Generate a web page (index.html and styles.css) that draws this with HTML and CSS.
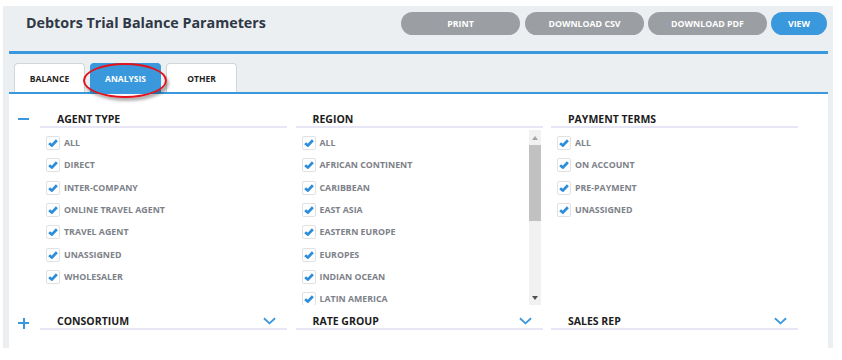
FILE: index.html
```html
<!doctype html>
<html>
<head>
	<title>Debtors Trial Balance Parameters</title>
	<link rel="stylesheet" href="styles.css">
</head>
<body>
	<div id="panel">
		<div class="header">
			<h1>Debtors Trial Balance Parameters</h1>
			<div class="actions">
				<button class="btn">PRINT</button>
				<button class="btn">DOWNLOAD CSV</button>
				<button class="btn">DOWNLOAD PDF</button>
				<button class="btn btn-primary">VIEW</button>
			</div>
		</div>

		<div class="tabs">
			<div class="tab">BALANCE</div>
			<div class="tab tab-active">ANALYSIS</div>
			<div class="tab">OTHER</div>
			<div class="marker"></div>
		</div>

		<div class="content">
			<!-- open group -->
			<div class="group">
				<div class="toggle"><span class="minus"></span></div>
				<div class="section">
					<div class="section-head">AGENT TYPE</div>
					<div class="list">
						<div class="item"><span class="box"><svg viewBox="0 0 14 14"><path d="M2.5 7.2 L5.6 10 L11.5 3.8"/></svg></span>ALL</div>
						<div class="item"><span class="box"><svg viewBox="0 0 14 14"><path d="M2.5 7.2 L5.6 10 L11.5 3.8"/></svg></span>DIRECT</div>
						<div class="item"><span class="box"><svg viewBox="0 0 14 14"><path d="M2.5 7.2 L5.6 10 L11.5 3.8"/></svg></span>INTER-COMPANY</div>
						<div class="item"><span class="box"><svg viewBox="0 0 14 14"><path d="M2.5 7.2 L5.6 10 L11.5 3.8"/></svg></span>ONLINE TRAVEL AGENT</div>
						<div class="item"><span class="box"><svg viewBox="0 0 14 14"><path d="M2.5 7.2 L5.6 10 L11.5 3.8"/></svg></span>TRAVEL AGENT</div>
						<div class="item"><span class="box"><svg viewBox="0 0 14 14"><path d="M2.5 7.2 L5.6 10 L11.5 3.8"/></svg></span>UNASSIGNED</div>
						<div class="item"><span class="box"><svg viewBox="0 0 14 14"><path d="M2.5 7.2 L5.6 10 L11.5 3.8"/></svg></span>WHOLESALER</div>
					</div>
				</div>
				<div class="section">
					<div class="section-head">REGION</div>
					<div class="list list-scroll">
						<div class="items">
							<div class="item"><span class="box"><svg viewBox="0 0 14 14"><path d="M2.5 7.2 L5.6 10 L11.5 3.8"/></svg></span>ALL</div>
							<div class="item"><span class="box"><svg viewBox="0 0 14 14"><path d="M2.5 7.2 L5.6 10 L11.5 3.8"/></svg></span>AFRICAN CONTINENT</div>
							<div class="item"><span class="box"><svg viewBox="0 0 14 14"><path d="M2.5 7.2 L5.6 10 L11.5 3.8"/></svg></span>CARIBBEAN</div>
							<div class="item"><span class="box"><svg viewBox="0 0 14 14"><path d="M2.5 7.2 L5.6 10 L11.5 3.8"/></svg></span>EAST ASIA</div>
							<div class="item"><span class="box"><svg viewBox="0 0 14 14"><path d="M2.5 7.2 L5.6 10 L11.5 3.8"/></svg></span>EASTERN EUROPE</div>
							<div class="item"><span class="box"><svg viewBox="0 0 14 14"><path d="M2.5 7.2 L5.6 10 L11.5 3.8"/></svg></span>EUROPES</div>
							<div class="item"><span class="box"><svg viewBox="0 0 14 14"><path d="M2.5 7.2 L5.6 10 L11.5 3.8"/></svg></span>INDIAN OCEAN</div>
							<div class="item"><span class="box"><svg viewBox="0 0 14 14"><path d="M2.5 7.2 L5.6 10 L11.5 3.8"/></svg></span>LATIN AMERICA</div>
						</div>
						<div class="scrollbar">
							<span class="arrow-up"></span>
							<span class="thumb"></span>
							<span class="arrow-down"></span>
						</div>
					</div>
				</div>
				<div class="section">
					<div class="section-head">PAYMENT TERMS</div>
					<div class="list">
						<div class="item"><span class="box"><svg viewBox="0 0 14 14"><path d="M2.5 7.2 L5.6 10 L11.5 3.8"/></svg></span>ALL</div>
						<div class="item"><span class="box"><svg viewBox="0 0 14 14"><path d="M2.5 7.2 L5.6 10 L11.5 3.8"/></svg></span>ON ACCOUNT</div>
						<div class="item"><span class="box"><svg viewBox="0 0 14 14"><path d="M2.5 7.2 L5.6 10 L11.5 3.8"/></svg></span>PRE-PAYMENT</div>
						<div class="item"><span class="box"><svg viewBox="0 0 14 14"><path d="M2.5 7.2 L5.6 10 L11.5 3.8"/></svg></span>UNASSIGNED</div>
					</div>
				</div>
			</div>

			<!-- closed group -->
			<div class="group group-closed">
				<div class="toggle"><span class="plus"></span></div>
				<div class="section">
					<div class="section-head">CONSORTIUM<svg class="chevron" viewBox="0 0 14 8"><path d="M1 1 L7 6.5 L13 1"/></svg></div>
				</div>
				<div class="section">
					<div class="section-head">RATE GROUP<svg class="chevron" viewBox="0 0 14 8"><path d="M1 1 L7 6.5 L13 1"/></svg></div>
				</div>
				<div class="section">
					<div class="section-head">SALES REP<svg class="chevron" viewBox="0 0 14 8"><path d="M1 1 L7 6.5 L13 1"/></svg></div>
				</div>
			</div>
		</div>
	</div>
</body>
</html>
```

FILE: styles.css
```css
body {
	margin: 0;
	font-family: "Open Sans", "DejaVu Sans", sans-serif;
	background-color: #fff;
}

#panel {
	margin: 6px 0 0 3px;
	width: 830px;
	height: 342px;
	padding: 0 5px 0 6px;
	box-sizing: border-box;
	background-color: #eceff1;
	display: flex;
	flex-direction: column;
}

.header {
	display: flex;
	justify-content: space-between;
	align-items: flex-start;
	height: 45px;
	border-bottom: 3px solid #3a98dc;
}

h1 {
	margin: 7px 0 0 17px;
	font-size: 14.3px;
	font-weight: 700;
	color: #2f3846;
}

.actions {
	display: flex;
	gap: 4px;
	margin: 6px 1px 0 0;
}

.btn {
	height: 23px;
	width: 119px;
	border: none;
	border-radius: 12px;
	background-color: #9b9ea2;
	color: #fff;
	font-family: "Open Sans", sans-serif;
	font-size: 8.8px;
	font-weight: 700;
	padding: 0;
}

.btn:first-child {
	margin-right: 1px;
}

.btn-primary {
	width: 56px;
	background-color: #3a98dc;
}

.tabs {
	position: relative;
	display: flex;
	gap: 5px;
	padding: 9px 0 0 5px;
	height: 29px;
	border-bottom: 2px solid #3a98dc;
}

.tab {
	width: 71px;
	box-sizing: border-box;
	border: 1px solid #d3d6d9;
	border-bottom: none;
	border-radius: 4px 4px 0 0;
	background-color: #fff;
	font-size: 8.5px;
	font-weight: 700;
	color: #1e1e1e;
	text-align: center;
	line-height: 29px;
}

.tab-active {
	background-color: #3a98dc;
	border-color: #3a98dc;
	color: #fff;
}

/* annotation ring round the selected tab */
.marker {
	position: absolute;
	left: 74px;
	top: 9px;
	width: 80px;
	height: 31px;
	border: 2px solid #e2141b;
	border-radius: 50%;
	box-shadow: 2px 3px 3px rgba(0, 0, 0, 0.3);
}

.content {
	flex: 1;
	background-color: #fff;
}

.group {
	display: flex;
	padding-top: 17px;
}

.group-closed {
	padding-top: 8px;
}

.toggle {
	width: 31px;
	flex: none;
	position: relative;
}

.minus, .plus {
	position: absolute;
	left: 9px;
	top: 7px;
	width: 11px;
	height: 2px;
	background-color: #3a98dc;
}

.plus {
	top: 9px;
}

.plus:after {
	content: "";
	position: absolute;
	left: 4.5px;
	top: -4.5px;
	width: 2px;
	height: 11px;
	background-color: #3a98dc;
}

.section {
	width: 247px;
	margin-right: 8.5px;
}

.section-head {
	display: flex;
	align-items: center;
	justify-content: space-between;
	height: 15px;
	padding: 0 11px 0 17px;
	border-bottom: 2px solid #e6e6f6;
	font-size: 10.5px;
	font-weight: 700;
	color: #1d1d1d;
}

.chevron {
	width: 13px;
	height: 8px;
	fill: none;
	stroke: #3a98dc;
	stroke-width: 2;
}

.list {
	height: 175px;
	margin-top: 2px;
	padding-top: 2px;
	box-sizing: border-box;
}

.list-scroll {
	display: flex;
	overflow: hidden;
}

.items {
	flex: 1;
}

.item {
	display: flex;
	align-items: center;
	height: 22.3px;
	padding-left: 6px;
	font-size: 8.8px;
	font-weight: 700;
	color: #7d8188;
}

.box {
	width: 14px;
	height: 14px;
	box-sizing: border-box;
	border: 1px solid #dfe1e3;
	border-radius: 2px;
	margin-right: 4px;
	background-color: #fff;
}

.box svg {
	display: block;
	width: 12px;
	height: 12px;
	fill: none;
	stroke: #2c8edb;
	stroke-width: 3.2;
	stroke-linejoin: round;
}

.scrollbar {
	width: 12px;
	margin: -2px 2px 0 0;
	height: 175px;
	background-color: #f1f1f1;
	display: flex;
	flex-direction: column;
	align-items: center;
}

.arrow-up, .arrow-down {
	width: 0;
	height: 0;
	border-left: 3.5px solid transparent;
	border-right: 3.5px solid transparent;
	margin: 6px 0 5px;
}

.arrow-up {
	border-bottom: 4px solid #a3a3a3;
}

.arrow-down {
	border-top: 4px solid #505050;
	margin-top: auto;
}

.thumb {
	width: 12px;
	height: 76px;
	background-color: #c1c1c1;
}
```
